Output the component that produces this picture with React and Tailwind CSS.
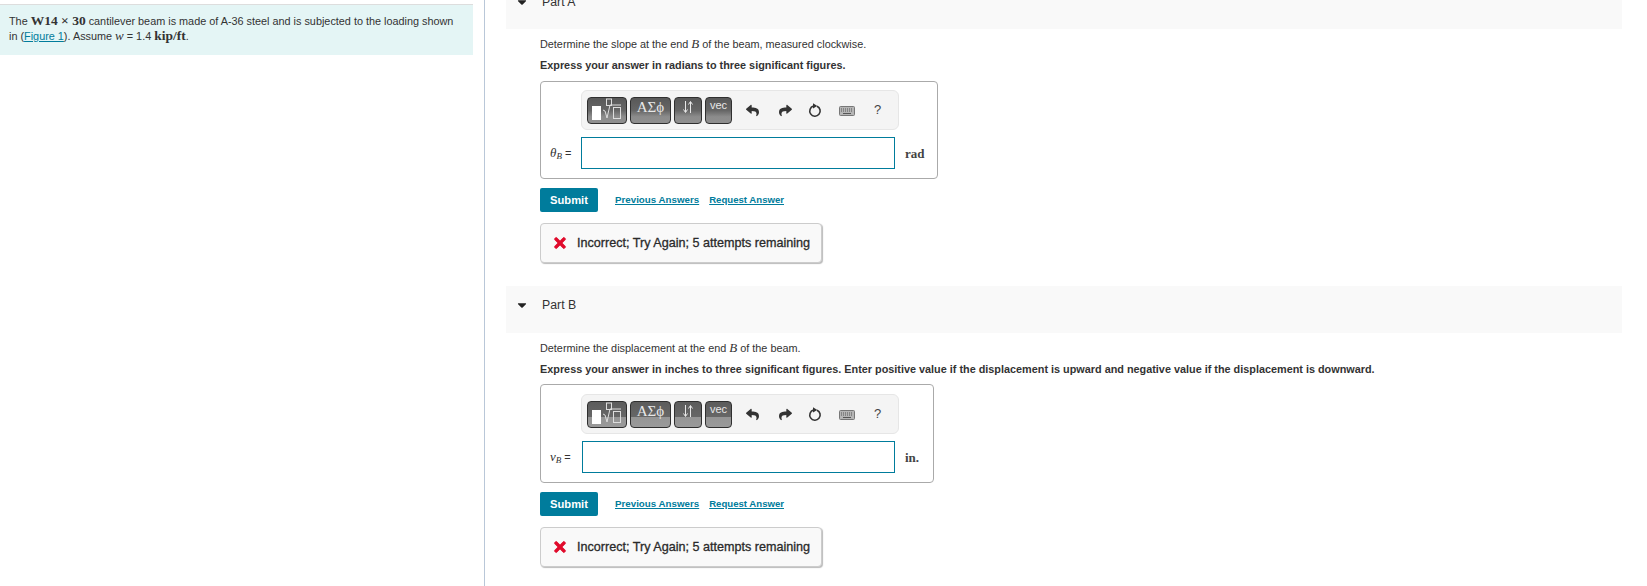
import React from 'react';
import { FaReply, FaShare, FaTimes, FaCaretDown } from 'react-icons/fa';

const Math_ = ({ children, className = '' }) => (
    <span className={`font-['Liberation_Serif',serif] leading-none ${className}`}>{children}</span>
);

const toolBtn = "h-[27px] shrink-0 overflow-hidden rounded-[4px] border border-[#2f2f2f] text-[#e8e8e8]";
const softBg = "bg-[linear-gradient(to_bottom,#585858_0%,#666_50%,#8c8c8c_75%,#8f8f8f_100%)]";
const hardBg = "bg-[linear-gradient(to_bottom,#5c5c5c_0%,#666_58%,#959595_62%,#9a9a9a_100%)]";

const Keyboard = () => (
    <svg width="16" height="10" viewBox="0 0 16 10">
        <rect x="0.5" y="0.5" width="15" height="9" rx="1" fill="#b5b5b5" stroke="#777" />
        <path d="M2 3h12M2 5h12" stroke="#555" strokeWidth="1" strokeDasharray="1 1" />
        <path d="M4 7.5h8" stroke="#555" strokeWidth="1" />
    </svg>
);

const Reset = () => (
    <svg width="14" height="15" viewBox="0 0 14 15">
        <path d="M9 3.2A5.2 5.2 0 1 1 5.5 3" fill="none" stroke="#333" strokeWidth="1.6" />
        <path d="M5 0.3l4.3 2.6L5 5.4z" fill="#333" />
    </svg>
);

const Toolbar = ({ btnBg }) => (
    <div className="ml-[40px] flex h-[40px] w-[318px] items-center rounded-[6px] border border-[#e6e6e6] bg-[#f4f4f4] pl-[5px]">
        <button className={`${toolBtn} ${btnBg} w-[40px]`}>
            <svg width="38" height="25" viewBox="0 0 38 25">
                <rect x="4" y="8" width="9" height="14" fill="#fff" />
                <rect x="18.5" y="1" width="5" height="6.5" fill="none" stroke="#ddd" />
                <path d="M15 12l2 1 2 7 3-13h11" fill="none" stroke="#ddd" strokeWidth="1" />
                <rect x="25.5" y="9.5" width="7" height="11" fill="none" stroke="#ddd" />
            </svg>
        </button>
        <button className={`${toolBtn} ${btnBg} ml-[3px] w-[41px] pb-[5px] font-['Liberation_Serif',serif] text-[15px] leading-none`}>ΑΣϕ</button>
        <button className={`${toolBtn} ${btnBg} ml-[3px] w-[28px]`}>
            <svg width="26" height="25" viewBox="0 0 26 25">
                <path d="M10.5 3v11M8.5 11.5l2 3 2-3M15.5 15V4M13.5 6.5l2-3 2 3" fill="none" stroke="#e8e8e8" strokeWidth="1" />
            </svg>
        </button>
        <button className={`${toolBtn} ${btnBg} ml-[3px] w-[27px] pb-[9px] font-['Liberation_Sans',sans-serif] text-[11px] leading-none`}>vec</button>
        <div className="ml-[13px] flex w-[14px] justify-center text-[#333]"><FaReply size={13} /></div>
        <div className="ml-[19px] flex w-[14px] justify-center text-[#333]"><FaShare size={13} /></div>
        <div className="ml-[16px] flex w-[14px] justify-center"><Reset /></div>
        <div className="ml-[16px] flex w-[18px] justify-center pt-[2px]"><Keyboard /></div>
        <div className="ml-[18px] text-[13px] text-[#444]">?</div>
    </div>
);

const AnswerBox = ({ symbol, sub, unit, width, height, top, btnBg, inputLeft, inputWidth }) => (
    <div className={`${width} ${height} ${top} rounded-[4px] border border-[#aaa]`}>
        <Toolbar btnBg={btnBg} />
        <div className="mt-[7px] flex h-[32px] items-center">
            <div className={`${inputLeft} pl-[9px] text-[11px] text-[#333]`}>
                <Math_ className="text-[13px] italic">{symbol}<sub className="text-[9px]">{sub}</sub></Math_> =
            </div>
            <div className={`${inputWidth} h-[32px] border border-[#007c9c] bg-white`} />
            <Math_ className="ml-[10px] text-[13px] font-bold text-[#444]">{unit}</Math_>
        </div>
    </div>
);

const SubmitRow = () => (
    <div className="mt-[9px] flex h-[24px] items-center">
        <button className="h-[24px] w-[58px] rounded-[2px] bg-[#007c9c] text-[11.2px] font-bold text-white">Submit</button>
        <a className="ml-[17px] text-[9.75px] font-bold text-[#007c9c] underline">Previous Answers</a>
        <a className="ml-[10px] text-[9.6px] font-bold text-[#007c9c] underline">Request Answer</a>
    </div>
);

const Feedback = () => (
    <div className="mt-[11px] flex h-[40px] w-[282px] items-center rounded-[4px] border border-[#ccc] bg-[#f9f9f9] pl-[11px] shadow-[1px_1px_1px_#bbb]">
        <FaTimes size={16} className="text-[#e00b2c] [stroke-width:25px] stroke-[#e00b2c]" />
        <span className="ml-[9px] text-[12.6px] text-[#2a2a2a] [-webkit-text-stroke:0.3px_#2a2a2a]">Incorrect; Try Again; 5 attempts remaining</span>
    </div>
);

const PartHeader = ({ label, className = '' }) => (
    <div className={`ml-[21px] mr-[25px] flex h-[47px] items-center bg-[#f9f9f9] ${className}`}>
        <FaCaretDown size={14} className="ml-[9px] text-[#222]" />
        <span className="ml-[13px] text-[12.3px] text-[#333]">{label}</span>
    </div>
);

const App = () => {
    return (
        <div className="flex h-[586px] w-[1647px] overflow-hidden bg-white font-['Liberation_Sans',Arial,sans-serif] text-[#333]">
            <div className="w-[484px] shrink-0 pt-[4px]">
                <div className="h-[51px] w-[473px] border-t border-[#ddd] bg-[#e4f5f5] pl-[9px] pt-[9px] text-[10.85px] leading-[15px]">
                    The <Math_ className="text-[13.5px] font-bold">W14 × 30</Math_> cantilever beam is made of A-36 steel and is subjected to the loading shown<br />
                    in (<a className="text-[#007c9c] underline">Figure 1</a>). Assume <Math_ className="text-[13px] italic">w</Math_> = 1.4 <Math_ className="text-[13.5px] font-bold">kip/ft</Math_>.
                </div>
            </div>
            <div className="flex-1 border-l border-[#b9c7d8]">
                <PartHeader label="Part A" className="mt-[-18px] pb-[7px]" />
                <div className="ml-[55px]">
                    <p className="mt-[6px] h-[18px] text-[10.85px] leading-[18px]">Determine the slope at the end <Math_ className="text-[13px] italic">B</Math_> of the beam, measured clockwise.</p>
                    <p className="mt-[3px] text-[10.85px] font-bold leading-[18px]">Express your answer in radians to three significant figures.</p>
                    <div className="mt-[7px]">
                        <AnswerBox symbol="θ" sub="B" unit="rad" width="w-[398px]" height="h-[98px]" top="pt-[8px]" btnBg={softBg} inputLeft="w-[40px]" inputWidth="w-[314px]" />
                    </div>
                    <SubmitRow />
                    <Feedback />
                </div>
                <PartHeader label="Part B" className="mt-[23px] pb-[9px]" />
                <div className="ml-[55px]">
                    <p className="mt-[6px] h-[18px] text-[10.85px] leading-[18px]">Determine the displacement at the end <Math_ className="text-[13px] italic">B</Math_> of the beam.</p>
                    <p className="mt-[3px] text-[10.85px] font-bold leading-[18px]">Express your answer in inches to three significant figures. Enter positive value if the displacement is upward and negative value if the displacement is downward.</p>
                    <div className="mt-[6px]">
                        <AnswerBox symbol="v" sub="B" unit="in." width="w-[394px]" height="h-[99px]" top="pt-[9px]" btnBg={hardBg} inputLeft="w-[41px]" inputWidth="w-[313px]" />
                    </div>
                    <SubmitRow />
                    <Feedback />
                </div>
            </div>
        </div>
    );
};

export default App;
